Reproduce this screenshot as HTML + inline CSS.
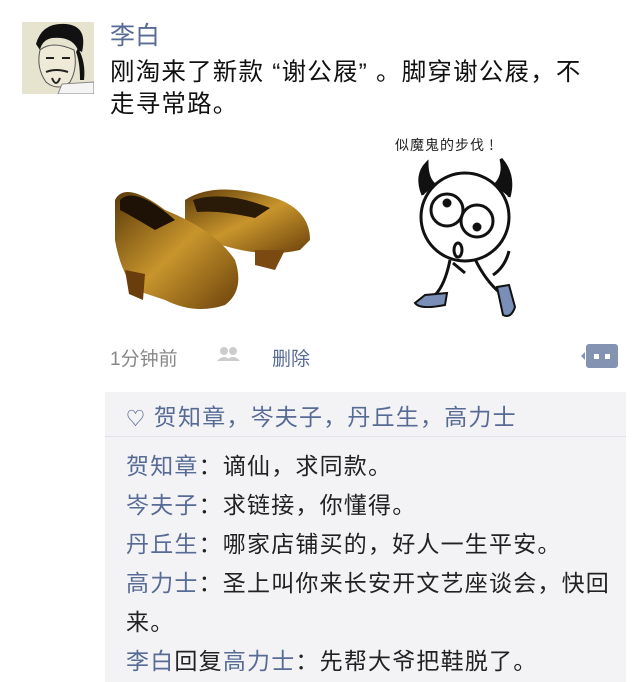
<!DOCTYPE html>
<html><head><meta charset="utf-8"><style>
body{margin:0;width:640px;height:678px;background:#fff;overflow:hidden;font-family:"Liberation Sans","Noto Sans CJK SC",sans-serif;position:relative}
.a{position:absolute}
.name{color:#576b95}
.box{position:absolute;left:105px;top:392px;width:521px;height:290px;background:#f3f3f5}
.c{position:absolute;left:21px;font-size:23px;color:#222;letter-spacing:1.2px;white-space:nowrap}
.c b{font-weight:normal;color:#576b95}
</style></head><body>
<svg class="a" style="left:22px;top:22px" width="72" height="72" viewBox="0 0 72 72">
<rect width="72" height="72" fill="#e6e3cf"/>
<path d="M14 22 Q20 0 44 2 Q66 4 60 30 L56 28 Q50 14 30 16 Q20 18 18 28Z" fill="#111"/>
<path d="M56 26 Q64 40 62 58 L58 58 Q58 40 54 30Z" fill="#111"/>
<path d="M18 28 Q30 18 52 28 Q56 46 48 60 Q36 70 24 60 Q14 46 18 28Z" fill="#efe9d8" stroke="#555" stroke-width="1"/>
<path d="M24 50 Q34 46 46 50 M30 56 Q34 66 38 56 M24 36 L32 36 M40 36 L48 36" stroke="#222" stroke-width="2" fill="none"/>
<path d="M40 62 L72 60 L72 72 L36 72Z" fill="#f4f4f4" stroke="#888"/>
</svg>
<div class="a name" style="left:110px;top:16px;font-size:25px">李白</div>
<div class="a" style="left:110px;top:57px;font-size:24.5px;line-height:32px;color:#111;width:520px;letter-spacing:1.2px;white-space:nowrap">刚淘来了新款 “谢公屐” 。脚穿谢公屐，不<br>走寻常路。</div>
<svg class="a" style="left:105px;top:170px" width="215" height="150" viewBox="0 0 215 150">
<defs><linearGradient id="g" x1="0" y1="0" x2="1" y2="1"><stop offset="0" stop-color="#5a3a0a"/><stop offset=".5" stop-color="#c8952c"/><stop offset="1" stop-color="#6b420c"/></linearGradient></defs>
<path d="M80 30 Q110 10 170 28 Q205 40 205 70 L195 80 Q160 88 120 76 Q90 70 80 60Z" fill="url(#g)"/>
<path d="M88 30 Q120 20 165 38 L150 48 Q115 40 92 42Z" fill="#2a1a08"/>
<path d="M150 80 L180 80 L170 100 L150 95Z" fill="#7a4a10"/>
<path d="M10 30 Q20 10 60 40 Q110 60 130 90 Q140 120 120 135 Q90 145 60 130 L30 120 Q15 100 10 70Z" fill="url(#g)"/>
<path d="M15 30 Q30 15 70 50 L50 60 Q25 45 15 40Z" fill="#1e1206"/>
<path d="M20 100 L40 104 L38 130 L24 124Z" fill="#6a3e0c"/>
</svg>
<div class="a" style="left:395px;top:135px;font-size:14px;color:#222;font-family:'Noto Sans CJK SC',sans-serif;letter-spacing:1px">似魔鬼的步伐 !</div>
<svg class="a" style="left:405px;top:155px" width="130" height="170" viewBox="0 0 130 170" fill="none" stroke="#111" stroke-width="3">
<path d="M18 40 Q10 20 22 8 Q22 24 30 30" fill="#111"/>
<path d="M90 30 Q100 20 96 4 Q110 20 104 42" fill="#111"/>
<circle cx="60" cy="62" r="44"/>
<circle cx="42" cy="55" r="16"/><circle cx="72" cy="66" r="16"/>
<circle cx="42" cy="48" r="3" fill="#111"/><circle cx="72" cy="72" r="3" fill="#111"/>
<ellipse cx="53" cy="95" rx="4" ry="7"/>
<path d="M45 105 Q40 130 30 140 M70 104 Q80 125 95 138 M60 118 L48 108 M88 120 Q100 112 104 96"/>
<path d="M20 140 L10 148 Q15 155 40 150 L42 138Z" fill="#7a8fb8" stroke-width="2"/>
<path d="M92 132 L98 160 Q106 164 110 152 L104 130Z" fill="#7a8fb8" stroke-width="2"/>
</svg>
<div class="a" style="left:110px;top:344px;font-size:19px;color:#888">1分钟前</div>
<svg class="a" style="left:216px;top:346px" width="26" height="16"><circle cx="8" cy="5" r="4" fill="#ccc"/><circle cx="17" cy="5" r="4" fill="#ccc"/><path d="M1 15 Q8 7 15 15Z M10 15 Q17 7 24 15Z" fill="#ccc"/></svg>
<div class="a name" style="left:272px;top:344px;font-size:19px">删除</div>
<div class="a" style="left:586px;top:344px;width:32px;height:24px;background:#8593b2;border-radius:3px"></div>
<div class="a" style="left:581px;top:352px;width:0;height:0;border:4px solid transparent;border-right-color:#8593b2;border-left:0"></div>
<div class="a" style="left:594px;top:354px;width:5px;height:5px;background:#fff"></div>
<div class="a" style="left:605px;top:354px;width:5px;height:5px;background:#fff"></div>
<div class="a" style="left:118px;top:384px;width:0;height:0;border:8px solid transparent;border-bottom-color:#f3f3f5"></div>
<div class="box">
<div class="c" style="top:6px;color:#576b95"><span style="font-size:19px">♡</span> 贺知章，岑夫子，丹丘生，高力士</div>
<div style="position:absolute;left:0;right:0;top:44px;height:1px;background:#e2e2e6"></div>
<div class="c" style="top:55px"><b>贺知章</b>：谪仙，求同款。</div>
<div class="c" style="top:94px"><b>岑夫子</b>：求链接，你懂得。</div>
<div class="c" style="top:133px"><b>丹丘生</b>：哪家店铺买的，好人一生平安。</div>
<div class="c" style="top:172px"><b>高力士</b>：圣上叫你来长安开文艺座谈会，快回</div>
<div class="c" style="top:211px">来。</div>
<div class="c" style="top:250px"><b>李白</b>回复<b>高力士</b>：先帮大爷把鞋脱了。</div>
</div>
</body></html>
